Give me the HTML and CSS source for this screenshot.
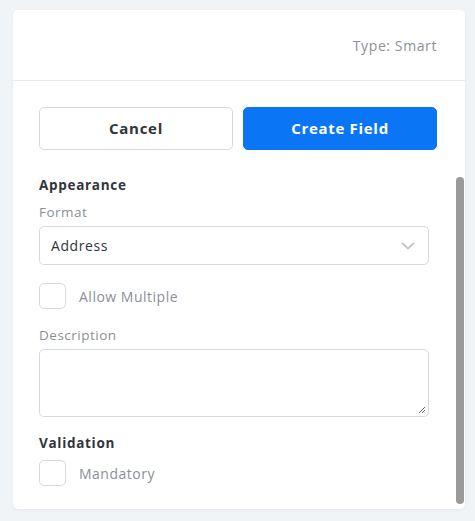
FILE: index.html
```html
<!DOCTYPE html>
<html>
<head>
<meta charset="utf-8">
<link rel="stylesheet" href="styles.css">
</head>
<body>
<div class="card">
  <div class="card-head">
    <span class="type">Type: Smart</span>
  </div>
  <div class="card-body">
    <div class="actions">
      <button class="btn btn-cancel">Cancel</button>
      <button class="btn btn-primary">Create Field</button>
    </div>
    <div class="form">
      <div class="section-title">Appearance</div>
      <div class="label">Format</div>
      <div class="select">
        <span>Address</span>
        <svg class="chev" width="14" height="8" viewBox="0 0 14 8"><path d="M1.5 1.5 L7 6.5 L12.5 1.5" fill="none" stroke="#c4c8ce" stroke-width="2" stroke-linecap="round" stroke-linejoin="round"/></svg>
      </div>
      <label class="check-row first">
        <span class="box"></span>
        <span class="check-text">Allow Multiple</span>
      </label>
      <div class="label desc-label">Description</div>
      <div class="textarea">
        <svg class="grip" width="8" height="8" viewBox="0 0 8 8"><path d="M7 1 L1 7 M7 4 L4 7" stroke="#555" stroke-width="0.9"/></svg>
      </div>
      <div class="section-title validation">Validation</div>
      <label class="check-row">
        <span class="box"></span>
        <span class="check-text">Mandatory</span>
      </label>
    </div>
    <div class="thumb"></div>
  </div>
</div>
</body>
</html>
```
FILE: styles.css
```css
* { box-sizing: border-box; }
html, body { margin: 0; padding: 0; }
body {
  background: #f1f4f7;
  font-family: "Open Sans", "Liberation Sans", sans-serif;
  width: 475px;
  height: 521px;
  padding: 10px 10px 0 13px;
}
.card {
  width: 452px;
  height: 499px;
  background: #fff;
  border-radius: 5px;
  box-shadow: 0 1px 3px rgba(0,0,0,0.06);
  display: flex;
  flex-direction: column;
}
.card-head {
  height: 71px;
  border-bottom: 1px solid #e6ecf2;
  display: flex;
  align-items: center;
  justify-content: flex-end;
  padding-right: 28px;
}
.type {
  font-size: 14px;
  letter-spacing: 0.6px;
  color: #8b8f98;
  margin-top: 1px;
}
.card-body {
  position: relative;
  flex: 1;
  padding: 26px 28px 0 26px;
}
.actions {
  display: flex;
  gap: 10px;
}
.btn {
  flex: 1;
  height: 43px;
  border-radius: 5px;
  font-family: inherit;
  font-size: 15px;
  font-weight: 700;
  letter-spacing: 0.7px;
  padding-bottom: 2px;
  cursor: pointer;
}
.btn-cancel {
  background: #fff;
  border: 1px solid #d3d9e0;
  color: #2f353d;
}
.btn-primary {
  background: #0a76f6;
  border: 1px solid #0a76f6;
  color: #fff;
}
.form {
  width: 390px;
  padding-top: 26px;
}
.section-title {
  font-size: 13.5px;
  font-weight: 700;
  color: #30353c;
  line-height: 18px;
  letter-spacing: 0.7px;
}
.label {
  font-size: 13.5px;
  letter-spacing: 0.5px;
  color: #8b8f98;
  line-height: 18px;
  margin-top: 9px;
}
.select {
  margin-top: 5px;
  height: 39px;
  border: 1px solid #d3d9e0;
  border-radius: 5px;
  display: flex;
  align-items: center;
  justify-content: space-between;
  padding: 0 13px 0 11px;
  font-size: 14px;
  letter-spacing: 0.6px;
  color: #30353c;
}
.chev { margin-top: 1px; }
.check-row {
  display: flex;
  align-items: center;
  gap: 13px;
  margin-top: 18px;
}
.box {
  width: 27px;
  height: 26px;
  border: 1px solid #d3d9e0;
  border-radius: 5px;
  background: #fff;
}
.check-text {
  font-size: 14px;
  letter-spacing: 0.5px;
  color: #8b8f98;
}
.desc-label { margin-top: 17px; }
.textarea {
  position: relative;
  margin-top: 5px;
  height: 68px;
  border: 1px solid #d3d9e0;
  border-radius: 5px;
}
.grip {
  position: absolute;
  right: 2px;
  bottom: 2px;
}
.validation { margin-top: 17px; }
.check-row + .check-row, .validation + .check-row { margin-top: 8px; }
.thumb {
  position: absolute;
  right: 1px;
  top: 96px;
  width: 8px;
  height: 327px;
  background: #9a9a9a;
  border-radius: 4px;
}
```
